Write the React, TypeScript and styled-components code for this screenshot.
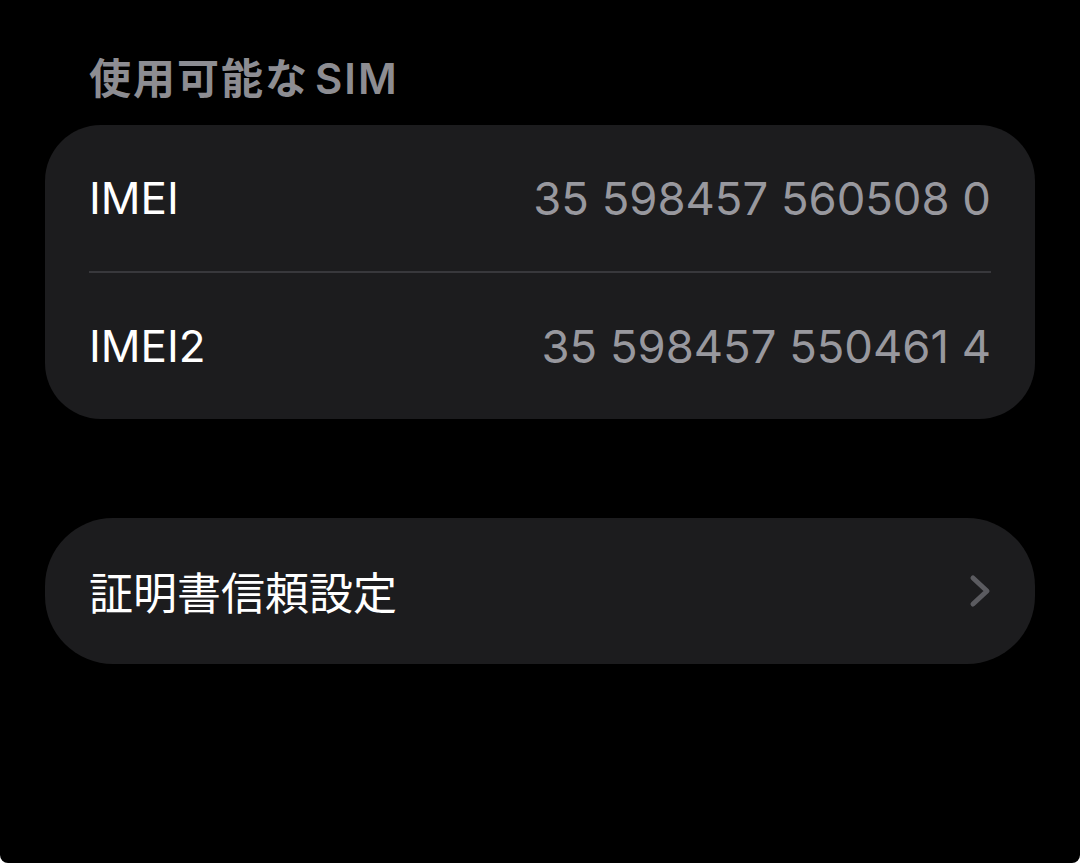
import styled, { createGlobalStyle } from "styled-components";

const GlobalStyle = createGlobalStyle`
  html, body {
    margin: 0;
    padding: 0;
    background: #ffffff;
  }
  #root {
    min-height: 863px;
  }
`

const Screen = styled.div`
  width: 1080px;
  height: 863px;
  background: #000000;
  border-radius: 0 0 8px 8px;
  padding: 0 45px;
  box-sizing: border-box;
  display: flex;
  flex-direction: column;
  font-family: Inter, "Noto Sans CJK JP", sans-serif;
  -webkit-font-smoothing: antialiased;
`

const SectionTitle = styled.div`
  color: #8d8d92;
  font-size: 42px;
  font-weight: 600;
  letter-spacing: 2px;
  line-height: 48px;
  padding: 55px 0 0 44px;
  margin-bottom: 22px;
`

const TitleLatin = styled.span`
  margin-left: 6px;
`

const Card = styled.div<{ $radius: number }>`
  background: #1c1c1e;
  border-radius: ${(p) => p.$radius}px;
  padding: 0 44px;
  display: flex;
  flex-direction: column;
`

const Row = styled.div<{ $sep?: boolean }>`
  height: 146px;
  display: flex;
  align-items: center;
  justify-content: space-between;
  border-top: ${(p) => (p.$sep ? "2px solid #38383c" : "none")};
`

const Label = styled.span`
  color: #ffffff;
  font-size: 44px;
  font-weight: 400;
`

const Value = styled.span`
  color: #98989e;
  font-size: 45.4px;
  font-weight: 400;
`

const Spacer = styled.div`
  height: 99px;
`

const Chevron = styled.svg`
  width: 22px;
  height: 34px;
`

export default function App() {
  return (
    <>
      <GlobalStyle />
      <Screen>
        <SectionTitle>
          使用可能な<TitleLatin>SIM</TitleLatin>
        </SectionTitle>
        <Card $radius={56}>
          <Row>
            <Label>IMEI</Label>
            <Value>35 598457 560508 0</Value>
          </Row>
          <Row $sep>
            <Label>IMEI2</Label>
            <Value>35 598457 550461 4</Value>
          </Row>
        </Card>
        <Spacer />
        <Card $radius={68}>
          <Row>
            <Label>証明書信頼設定</Label>
            <Chevron viewBox="0 0 22 34" fill="none">
              <path d="M4 4 L18 17 L4 30" stroke="#5b5b60" strokeWidth="5" strokeLinecap="round" strokeLinejoin="round" />
            </Chevron>
          </Row>
        </Card>
      </Screen>
    </>
  );
}
